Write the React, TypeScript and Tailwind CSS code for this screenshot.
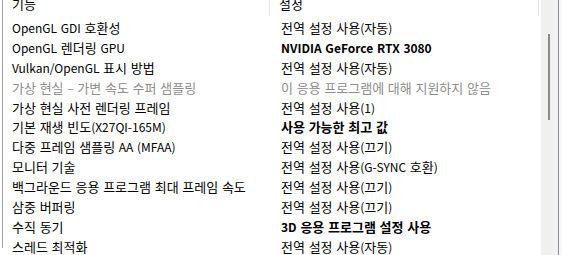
import React from "react";

type Row = { name: string; value: string; bold?: boolean; dim?: boolean };

const rows: Row[] = [
  { name: "OpenGL GDI 호환성", value: "전역 설정 사용(자동)" },
  { name: "OpenGL 렌더링 GPU", value: "NVIDIA GeForce RTX 3080", bold: true },
  { name: "Vulkan/OpenGL 표시 방법", value: "전역 설정 사용(자동)" },
  { name: "가상 현실 – 가변 속도 수퍼 샘플링", value: "이 응용 프로그램에 대해 지원하지 않음", dim: true },
  { name: "가상 현실 사전 렌더링 프레임", value: "전역 설정 사용(1)" },
  { name: "기본 재생 빈도(X27QI-165M)", value: "사용 가능한 최고 값", bold: true },
  { name: "다중 프레임 샘플링 AA (MFAA)", value: "전역 설정 사용(끄기)" },
  { name: "모니터 기술", value: "전역 설정 사용(G-SYNC 호환)" },
  { name: "백그라운드 응용 프로그램 최대 프레임 속도", value: "전역 설정 사용(끄기)" },
  { name: "삼중 버퍼링", value: "전역 설정 사용(끄기)" },
  { name: "수직 동기", value: "3D 응용 프로그램 설정 사용", bold: true },
  { name: "스레드 최적화", value: "전역 설정 사용(자동)" },
];

function Mixed({ text }: { text: string }) {
  const parts = text.split(/([\uAC00-\uD7A3\u3131-\u318E]+)/);
  return (
    <>
      {parts.map((p, i) =>
        /[\uAC00-\uD7A3\u3131-\u318E]/.test(p) ? (
          <span key={i} className="text-[13px]">
            {p}
          </span>
        ) : (
          <span key={i}>{p}</span>
        )
      )}
    </>
  );
}

export default function App() {
  return (
    <div
      className="w-[562px] h-[255px] overflow-hidden bg-white flex text-[12px] text-black"
      style={{ fontFamily: '"Noto Sans CJK KR", "Noto Sans", sans-serif' }}
    >
      <div className="w-[2px] shrink-0" />
      <div className="w-[539px] shrink-0 flex flex-col">
        <div className="flex h-[248px] flex-col border-l border-[#a0a0a0]">
          <div className="flex h-[16px] shrink-0 overflow-hidden">
            <div className="w-[267px] border-r border-[#e5e5e5] pl-[9px] leading-[20px] -mt-[6px]">
              <Mixed text="기능" />
            </div>
            <div className="w-[269px] border-r border-[#e5e5e5] pl-[9px] leading-[20px] -mt-[6px]">
              <Mixed text="설정" />
            </div>
          </div>
          <div className="h-[2px] shrink-0" />
          {rows.map((r) => (
            <div key={r.name} className="flex h-[19.9px] shrink-0 items-center leading-[20px] [word-spacing:1px]">
              <div className={`w-[268px] pl-[9px] whitespace-nowrap ${r.dim ? "text-[#8c8c8c]" : ""}`}>
                <Mixed text={r.name} />
              </div>
              <div
                className={`w-[269px] pl-[10px] whitespace-nowrap ${r.bold ? "font-bold" : ""} ${r.dim ? "text-[#8c8c8c]" : ""}`}
              >
                <Mixed text={r.value} />
              </div>
            </div>
          ))}
        </div>
      </div>
      <div className="w-[17px] shrink-0 bg-[#f0f0f0] flex flex-col">
        <div className="h-[34px]" />
        <div className="ml-[7px] w-[2px] h-[86px] bg-[#8b8b8b]" />
      </div>
      <div className="w-[1px] shrink-0 bg-[#8a8a9a]" />
      <div className="flex-1 bg-[#f7f7f7]" />
    </div>
  );
}
